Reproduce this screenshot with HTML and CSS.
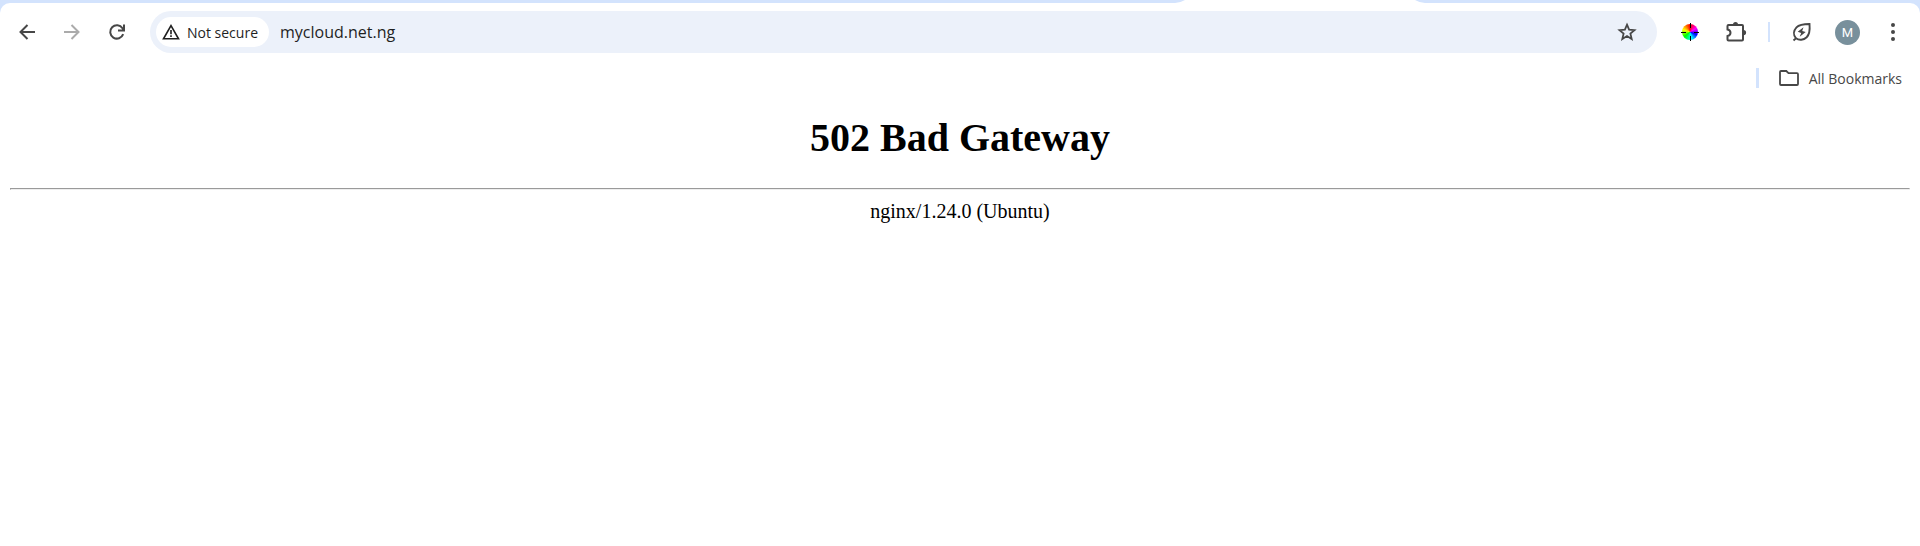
FILE: index.html
```html
<!DOCTYPE html>
<html lang="en">
<head>
<meta charset="utf-8">
<title>502 Bad Gateway</title>
<link rel="stylesheet" href="styles.css">
</head>
<body>
<header class="browser">
  <div class="tab-strip">
    <svg class="active-tab" viewBox="0 0 250 3" aria-hidden="true"><path d="M0 3Q6 2.4 10 0H240Q244 2.4 250 3Z" fill="#fff"/></svg>
  </div>
  <div class="chrome">
    <nav class="toolbar" aria-label="Browser toolbar">
      <div class="nav-buttons">
        <button class="icon-button" aria-label="Back"><svg width="18" height="18" viewBox="0 0 18 18" fill="none" stroke="#474747" stroke-width="2"><path d="M17 9H3M9.500 2L2.500 9L9.500 16"/></svg></button>
        <button class="icon-button" aria-label="Forward" disabled><svg width="18" height="18" viewBox="0 0 18 18" fill="none" stroke="#ababab" stroke-width="2"><path d="M1 9H15M8.500 2L15.500 9L8.500 16"/></svg></button>
        <button class="icon-button" aria-label="Reload"><svg width="18" height="18" viewBox="0 0 18 18" fill="none" stroke="#474747" stroke-width="2"><path d="M15.200 11.200A6.700 6.700 0 1 1 14.500 5.200L15.700 7M16 1.500V7.500H10"/></svg></button>
      </div>
      <div class="address-bar">
        <button class="security-chip">
          <svg width="18" height="16" viewBox="0 0 18 16" fill="none" stroke="#1f1f1f"><path stroke-width="1.600" d="M9 1.700L16.500 14.800H1.500Z"/><path stroke-width="1.600" d="M9 6V10.300M9 11.300V13"/></svg>
          <span>Not secure</span>
        </button>
        <input class="url" type="text" value="mycloud.net.ng" aria-label="Address" spellcheck="false">
        <button class="icon-button" aria-label="Bookmark this page"><svg width="20" height="20" viewBox="0 0 20 20" fill="none" stroke="#474747" stroke-width="1.800"><path d="M10 2.700L12.100 7.600L17.500 8.100L13.400 11.600L14.700 17L10 14.100L5.300 17L6.600 11.600L2.500 8.100L7.900 7.600Z"/></svg></button>
      </div>
      <div class="actions">
        <button class="icon-button" aria-label="Color picker"><span class="color-wheel"><svg width="18" height="18" viewBox="0 0 18 18" stroke="#000" stroke-width="1"><path d="M9.500 0V5M9.500 13V18M0 9.500H5M13 9.500H18"/></svg></span></button>
        <button class="icon-button" aria-label="Extensions"><svg width="22" height="22" viewBox="0 0 22 22"><path d="M3.500 4H17Q18 4 18 5V18.500Q18 19.500 17 19.500H3.500Q2.500 19.500 2.500 18.500V15Q5.500 14.500 5.500 11.800T2.500 8.500V5Q2.500 4 3.500 4Z" fill="none" stroke="#474747" stroke-width="2"/><path d="M8 3.500A2.500 2.500 0 0 1 13 3.500ZM18.500 9A2.500 2.500 0 0 1 18.500 14.200Z" fill="#474747"/></svg></button>
        <span class="divider"></span>
        <button class="icon-button" aria-label="Energy saver"><svg width="20" height="20" viewBox="0 0 20 20" fill="none" stroke="#474747"><path stroke-width="1.900" d="M1.500 18.500L4 16.300M4 16.300C1 13 1.500 8.500 4.500 5.300C7.500 2.200 12 2 17.500 2C18 7.500 18 12 14.700 15.200C11.500 18.200 7 18.500 4 16.300"/><path d="M11.500 5.200L5.700 9.700L9.200 11L7.700 14.800L13.700 10.100L10.200 8.900Z" fill="#474747" stroke="none"/></svg></button>
        <button class="avatar" aria-label="Profile M">M</button>
        <button class="icon-button" aria-label="Menu"><svg width="18" height="20" viewBox="0 0 18 20" fill="#474747"><circle cx="9" cy="3" r="2"/><circle cx="9" cy="10" r="2"/><circle cx="9" cy="17" r="2"/></svg></button>
      </div>
    </nav>
    <div class="bookmarks">
      <span class="divider"></span>
      <button class="all-bookmarks"><svg width="20" height="16" viewBox="0 0 20 16" fill="none" stroke="#474747" stroke-width="1.800"><path d="M1 2Q1 1 2 1H7.300L9.500 3.200H18Q19 3.200 19 4.200V14Q19 15 18 15H2Q1 15 1 14Z"/></svg><span>All Bookmarks</span></button>
    </div>
  </div>
</header>
<main class="page">
  <h1 class="title">502 Bad Gateway</h1>
  <hr class="rule">
  <p class="server">nginx/1.24.0 (Ubuntu)</p>
</main>
</body>
</html>
```
FILE: styles.css
```css
* { box-sizing: border-box; }
body { margin: 0; background: #fff; font-family: "Open Sans", "Noto Sans", sans-serif; }
button, input { margin: 0; padding: 0; border: 0; background: none; font-family: inherit; }
svg { display: block; }
.browser { background: #d3e3fd; }
.tab-strip { display: flex; height: 3px; padding-left: 61.2%; }
.active-tab { width: 250px; height: 3px; }
.chrome { background: #fff; border-radius: 10px 10px 0 0; }
.toolbar { display: flex; align-items: center; padding: 8px 9px; }
.nav-buttons { display: flex; gap: 9px; margin-right: 15px; }
.icon-button { display: grid; place-items: center; flex: none; width: 36px; height: 36px; }
.address-bar { display: flex; flex: 1; align-items: center; height: 42px; padding: 0 12px 0 6px; border-radius: 21px; background: #ecf1fa; }
.security-chip { display: flex; flex: none; align-items: center; gap: 7px; height: 30px; padding: 0 11px 0 6px; border-radius: 15px; background: #fff; color: #1f1f1f; font-size: 14px; }
.url { flex: 1; min-width: 0; height: 36px; padding-left: 11px; color: #1f1f1f; font-size: 16px; outline: 0; }
.actions { display: flex; align-items: center; margin-left: 15px; }
.actions .icon-button + .icon-button { margin-left: 10px; }
.color-wheel { display: grid; place-content: center; width: 16px; height: 16px; border-radius: 50%; background: conic-gradient(#f00, #f0f 60deg, #00f 110deg, #0ff 165deg, #0f0 230deg, #ff0 290deg, #f00); }
.divider { width: 2px; height: 20px; background: #d3e3fd; }
.actions .divider { margin: 0 14px; }
.avatar { width: 25px; height: 25px; margin: 0 15px; border-radius: 50%; background: #78909c; color: #fff; font: 13px/25px Roboto, sans-serif; }
.bookmarks { display: flex; justify-content: flex-end; align-items: center; gap: 20px; height: 34px; padding: 0 18px; }
.bookmarks .divider { width: 3px; }
.all-bookmarks { display: flex; align-items: center; gap: 10px; color: #474747; font-size: 14px; }
.page { padding: 20px 10px; text-align: center; color: #000; font-family: "Liberation Serif", serif; font-size: 20px; }
.title { margin: 0 0 27px; font-size: 40px; line-height: 46px; }
.rule { margin: 0 0 10px; border: 1px solid; border-color: #9a9a9a #eee #eee #9a9a9a; }
.server { margin: 0; line-height: 23px; }
```
